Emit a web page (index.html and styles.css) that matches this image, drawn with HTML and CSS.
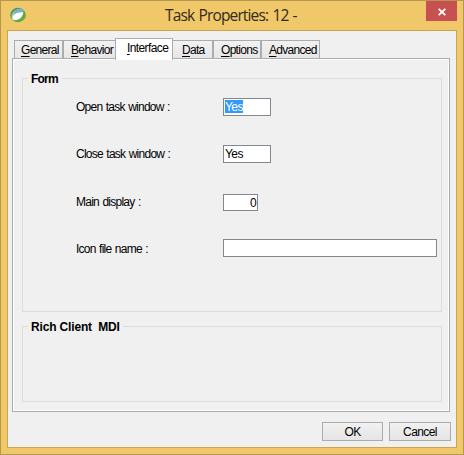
FILE: index.html
```html
<!DOCTYPE html>
<html lang="en">
<head>
<meta charset="utf-8">
<title>Task Properties: 12 -</title>
<link rel="stylesheet" href="styles.css">
</head>
<body>
<div class="window">
  <header class="titlebar">
    <svg class="app-icon" width="16" height="16" viewBox="0 0 16 16">
      <defs><linearGradient id="ring" x1="0" y1="0" x2="1" y2="1"><stop offset="0" stop-color="#3f8f6b"/><stop offset="1" stop-color="#66b338"/></linearGradient></defs>
      <ellipse cx="8" cy="8" rx="7.8" ry="7.2" fill="url(#ring)"/>
      <ellipse cx="7.3" cy="8.2" rx="6.6" ry="5.1" fill="#a4d08c" transform="rotate(-45 7.3 8.2)"/>
      <path d="M4.5 4.6C7 1 12 .8 13.6 3.2L14 6 3.5 7.6Z" fill="#7fb0c8"/>
      <path d="M2.6 12C1.6 8.5 6 4.6 13.6 5.2C13.8 9.5 10 13.6 4.5 13Z" fill="#fff"/>
      <path d="M3.6 13.2C9.5 13.8 13.4 9.8 13.6 3.6C16.8 8 14 14 8.5 15C6 15.2 4.4 14.4 3.6 13.2Z" fill="#62aa3b"/>
    </svg>
    <h1 class="title">Task Properties: 12 -</h1>
    <div class="close"><svg width="8" height="8" viewBox="0 0 8 8"><path d="M.7.8 7.3 7.2M7.3.8.7 7.2" stroke="#fff" stroke-width="1.8"/></svg></div>
  </header>
  <main class="client">
    <nav class="tabs">
      <div class="tab general"><span><u>G</u>eneral</span></div>
      <div class="tab behavior"><span><u>B</u>ehavior</span></div>
      <div class="tab interface"><span><u>I</u>nterface</span></div>
      <div class="tab data"><span><u>D</u>ata</span></div>
      <div class="tab options"><span><u>O</u>ptions</span></div>
      <div class="tab advanced"><span><u>A</u>dvanced</span></div>
    </nav>
    <section class="panel">
      <fieldset class="group form">
        <legend>Form</legend>
        <div class="row"><label>Open task window :</label><div class="field short"><mark>Yes</mark></div></div>
        <div class="row"><label>Close task window :</label><div class="field short"><span>Yes</span></div></div>
        <div class="row main-display"><label>Main display :</label><div class="field number"><span>0</span></div></div>
        <div class="row icon-file"><label>Icon file name :</label><div class="field long"></div></div>
      </fieldset>
      <fieldset class="group mdi">
        <legend>Rich Client&nbsp; MDI</legend>
      </fieldset>
    </section>
    <footer class="actions">
      <div class="button ok">OK</div>
      <div class="button cancel">Cancel</div>
    </footer>
  </main>
</div>
</body>
</html>
```
FILE: styles.css
```css
* { box-sizing: border-box; }
body {
  margin: 0;
  color: #000;
  font: 12px/14px "Liberation Sans", Arial, sans-serif;
  letter-spacing: -0.6px;
  white-space: nowrap;
}
.window {
  display: flex;
  flex-direction: column;
  width: 464px;
  height: 455px;
  padding: 0 6px 6px;
  border: 1px solid #b6974f;
  background: #f0c869;
}
.titlebar {
  display: grid;
  grid-template-columns: 150px 1fr 31px;
  height: 29px;
}
.app-icon { margin: 6px 0 0 3px; }
.title {
  margin: 4px 0 0 8px;
  font: 15.5px/20px "Open Sans", "Noto Sans", sans-serif;
  letter-spacing: -0.85px;
  word-spacing: 1px;
  color: #32291b;
}
.close {
  display: grid;
  place-items: center;
  width: 31px;
  height: 20px;
  padding-top: 1px;
  background: #c75050;
}
.client {
  flex: 1;
  display: flex;
  flex-direction: column;
  padding: 7px 7px 0 4px;
  border: 1px solid #c8a551;
  background: #f0f0f0;
}
.tabs {
  display: flex;
  align-items: flex-end;
  height: 20px;
  padding-left: 2px;
}
.tab {
  height: 18px;
  padding: 2px 0 0 6px;
  border: 1px solid #acacac;
  border-bottom: 0;
  background: linear-gradient(#f2f2f2, #e6e6e6);
  letter-spacing: -0.7px;
}
.tab span { display: block; }
.tab u { text-decoration-thickness: 1px; text-underline-offset: 2px; }
.general { width: 49px; }
.behavior { width: 53px; padding-left: 7px; letter-spacing: -0.65px; }
.interface {
  position: relative;
  width: 58px;
  height: 22px;
  margin: 0 0 -2px -1px;
  padding: 2px 0 0 11px;
  background: #fff;
  letter-spacing: -0.6px;
}
.data { width: 41px; margin-left: -1px; padding-left: 9px; }
.options { width: 48px; padding-left: 7px; }
.advanced { width: 59px; padding-left: 7px; }
.panel {
  width: 438px;
  height: 354px;
  padding: 19px 7px 0 9px;
  border: 1px solid #acacac;
  box-shadow: inset 0 0 0 1px #fff;
}
.group {
  position: relative;
  width: 420px;
  margin: 0;
  padding: 19px 0 0 53px;
  border: 1px solid #dcdcdc;
}
.group legend {
  position: absolute;
  top: -7px;
  left: 5px;
  padding: 0 3px;
  background: #f0f0f0;
  font-weight: bold;
}
.form { height: 234px; }
.mdi { height: 76px; margin-top: 14px; }
.form legend { letter-spacing: -0.8px; padding-right: 4px; }
.mdi legend { letter-spacing: -0.16px; }
.row {
  display: grid;
  grid-template-columns: 147px auto;
  justify-content: start;
  height: 47px;
}
.main-display { padding-top: 2px; }
.main-display label { padding-top: 1px; }
label { padding-top: 2px; letter-spacing: -0.75px; word-spacing: 0.8px; }
.icon-file label { padding-top: 3px; }
.field {
  height: 18px;
  padding: 1px;
  border: 1px solid #828790;
  background: #fff;
}
.field span, .field mark { display: block; width: max-content; height: 13px; }
.field mark { background: #3399ff; color: #fff; }
.short { width: 48px; }
.number { display: flex; justify-content: flex-end; width: 35px; height: 17px; }
.long { width: 214px; }
.actions {
  display: flex;
  justify-content: flex-end;
  gap: 6px;
  padding-top: 10px;
  margin-right: -2px;
}
.button {
  width: 62px;
  height: 19px;
  padding-top: 2px;
  border: 1px solid #acacac;
  background: linear-gradient(#f1f1f1, #e5e5e5);
  text-align: center;
}
.ok { width: 61px; }
```
